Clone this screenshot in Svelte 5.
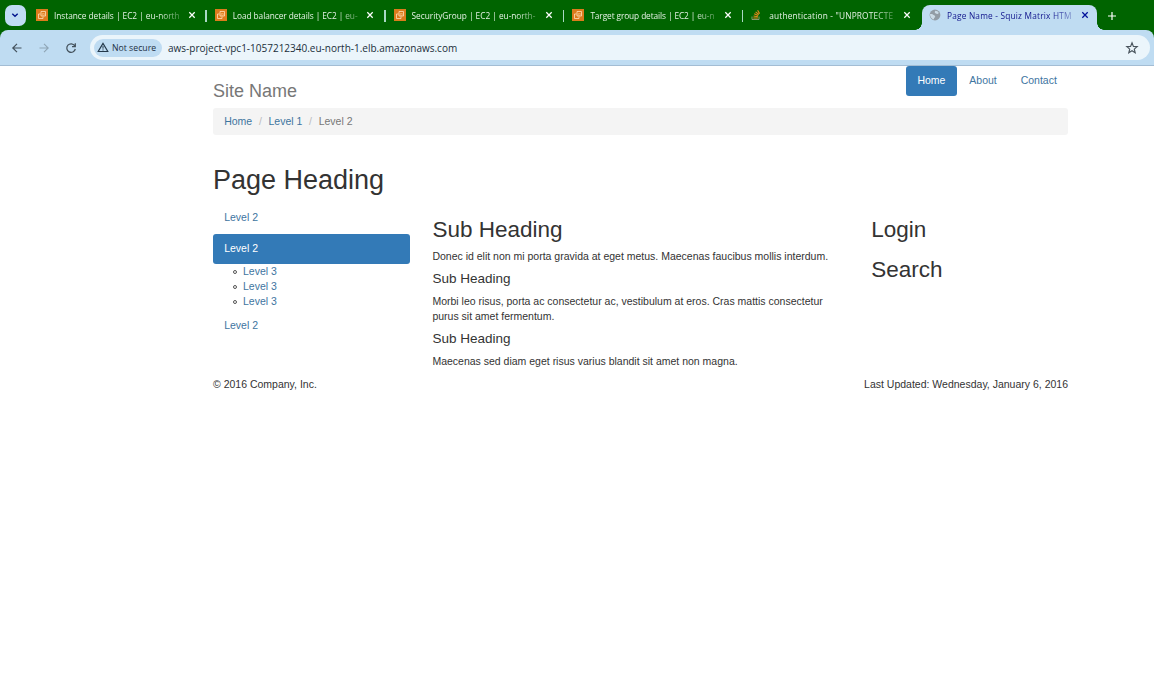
<script>
  const tabs = [
    { title: 'Instance details | EC2 | eu-north', icon: 'ec2', spacing: -0.03 },
    { title: 'Load balancer details | EC2 | eu-', icon: 'ec2', spacing: -0.07 },
    { title: 'SecurityGroup | EC2 | eu-north-', icon: 'ec2', spacing: -0.02 },
    { title: 'Target group details | EC2 | eu-n', icon: 'ec2', spacing: -0.1 },
    { title: 'authentication - "UNPROTECTE', icon: 'stack', spacing: 0.18 },
    { title: 'Page Name - Squiz Matrix HTM', icon: 'globe', active: true, spacing: 0.2 }
  ];
</script>

<div class="browser">
  <div class="tabstrip">
    <button class="tabsearch" aria-label="Search tabs">
      <svg width="8" height="8" viewBox="0 0 8 8"><path d="M1.3 2.7 4 5.3l2.7-2.6" fill="none" stroke="#00148c" stroke-width="1.4" /></svg>
    </button>
    <div class="tabs">
      {#each tabs as tab}
        <div class="tab" class:active={tab.active}>
          <span class="favicon">
            {#if tab.icon === 'ec2'}
              <svg width="12" height="12" viewBox="0 0 12 12"><path fill="#dc7b1c" d="M0 0h12v12H0z" /><path d="M5 2.5h4.5V7H5zM4.5 5h-2v4.5H7v-2" fill="none" stroke="#ffe0b8" stroke-width=".8" /><path d="M6.3 4.5h2v1.7h-2z" fill="none" stroke="#ffd09a" stroke-width=".5" /></svg>
            {:else if tab.icon === 'stack'}
              <svg width="12" height="12" viewBox="0 0 12 12"><path d="M1 7.5v3h7v-3" fill="none" stroke="#a6a68c" stroke-width=".8" /><path d="M2.3 9h4.5M2.5 7l4.4.8M3.2 4.8l4 1.8M4.6 2.8l3.2 2.7M6.6 1.2l2 3.4" stroke="#e9881c" stroke-width="1.1" /></svg>
            {:else}
              <svg width="12" height="12" viewBox="0 0 12 12"><circle cx="6" cy="6" r="5.4" fill="#929ca5" /><path d="M1 5c1.8-.3 3 .2 3.6 1.1.5.6 1.6.5 1.6 1.6-.1.9-1 .8-1.2 1.7l-.1 1.1C2.3 9.8.9 7.6 1 5zM6.2 1.8c1.8 0 2.9.8 3.6 2.1-.7.9-1.5 1.3-2.2.8-.8-.5-1.6-.3-1.8-1.2-.1-.7.3-1 .4-1.7z" fill="#cbdbe6" /></svg>
            {/if}
          </span>
          <span class="title" style:letter-spacing="{tab.spacing}px">{tab.title}</span>
          <svg class="close" width="8" height="8" viewBox="0 0 8 8"><path d="m1.3 1.3 5.4 5.4M6.7 1.3 1.3 6.7" stroke="currentColor" stroke-width="1.25" /></svg>
        </div>
      {/each}
    </div>
    <svg class="plus" width="10" height="10" viewBox="0 0 10 10"><path d="M5 1v8M1 5h8" stroke="#fff" stroke-width="1.2" /></svg>
  </div>

  <div class="toolbar">
    <svg class="nav" width="12" height="12" viewBox="0 0 12 12"><path d="M10.5 6H2M6 1.8 1.8 6 6 10.2" fill="none" stroke="#43515c" stroke-width="1.2" /></svg>
    <svg class="nav" width="12" height="12" viewBox="0 0 12 12"><path d="M1.5 6H10M6 1.8 10.2 6 6 10.2" fill="none" stroke="#8fa5b5" stroke-width="1.1" /></svg>
    <svg class="nav" width="12" height="12" viewBox="0 0 12 12"><path d="M9.7 3.7A4.3 4.3 0 1 0 10.3 7M10.3 1.2v3.3H7" fill="none" stroke="#43515c" stroke-width="1.25" /></svg>
    <div class="omnibox">
      <div class="chip">
        <svg width="12" height="11" viewBox="0 0 12 11"><path d="M6 1.4 1.2 9.5h9.6z" fill="none" stroke="#24384a" stroke-width="1.15" /><path d="M6 4v2.7M6 7.4v1.1" stroke="#24384a" stroke-width="1" /></svg>
        <span>Not secure</span>
      </div>
      <span class="url">aws-project-vpc1-1057212340.eu-north-1.elb.amazonaws.com</span>
      <svg class="star" width="14" height="14" viewBox="0 0 14 14"><path d="m7 1.8 1.4 3.6 3.8.2-2.9 2.5.9 3.7L7 9.8l-3.2 2 .9-3.7-2.9-2.5 3.8-.2z" fill="none" stroke="#49545d" stroke-width="1.15" /></svg>
    </div>
  </div>
</div>

<div class="container">
  <header>
    <h3>Site Name</h3>
    <nav>
      <a class="current" href="#home">Home</a>
      <a href="#about">About</a>
      <a href="#contact">Contact</a>
    </nav>
  </header>
  <ol class="breadcrumb">
    <li><a href="#home">Home</a></li>
    <li><a href="#one">Level 1</a></li>
    <li>Level 2</li>
  </ol>
  <h1>Page Heading</h1>
  <div class="row">
    <aside class="side">
      <a class="pill" href="#a">Level 2</a>
      <a class="pill on" href="#b">Level 2</a>
      <ul>
        <li><a href="#c">Level 3</a></li>
        <li><a href="#d">Level 3</a></li>
        <li><a href="#e">Level 3</a></li>
      </ul>
      <a class="pill" href="#f">Level 2</a>
    </aside>
    <main>
      <h2>Sub Heading</h2>
      <p class="first">Donec id elit non mi porta gravida at eget metus. Maecenas faucibus mollis interdum.</p>
      <h4>Sub Heading</h4>
      <p>Morbi leo risus, porta ac consectetur ac, vestibulum at eros. Cras mattis consectetur<br />purus sit amet fermentum.</p>
      <h4>Sub Heading</h4>
      <p>Maecenas sed diam eget risus varius blandit sit amet non magna.</p>
    </main>
    <section>
      <h2>Login</h2>
      <h2>Search</h2>
    </section>
  </div>
  <footer>
    <span>© 2016 Company, Inc.</span>
    <span>Last Updated: Wednesday, January 6, 2016</span>
  </footer>
</div>

<style>
  :global(body) { margin: 0; background: #fff; }
  :global(*), :global(*::before), :global(*::after) { box-sizing: border-box; }
  svg { display: block; flex: none; }
  .browser { font-family: "Open Sans", "Noto Sans", sans-serif; height: 66px; background: #006400; }
  .tabstrip { display: flex; height: 30px; }
  .tabsearch { width: 21px; height: 21px; margin: 5px 0 0 5px; padding: 0 1px 1px 0; border: 0; border-radius: 7px; background: #bfdcf3; display: grid; place-items: center; }
  .tabs { display: flex; padding-left: 1.5px; }
  .tab { position: relative; width: 178.8px; padding: 4px 12px 5px 8.5px; display: flex; align-items: center; color: #e5f2e5; }
  .tab:not(.active)::after { content: ""; position: absolute; right: -.5px; top: 10px; width: 1.5px; height: 12px; background: #a9d8c5; }
  .tab:nth-child(5)::after { display: none; }
  .favicon { width: 18px; flex: none; }
  .title { width: 130px; flex: none; white-space: nowrap; font-size: 8.3px; line-height: 16px; padding-top: 2px; -webkit-mask-image: linear-gradient(90deg, #000 80%, rgba(0, 0, 0, .3) 97%); mask-image: linear-gradient(90deg, #000 80%, rgba(0, 0, 0, .3) 97%); }
  .close { margin-left: 3.5px; color: #fff; }
  .active { width: 175px; margin: 5px 0 0 1px; padding: 0 0 5px 6.5px; border-radius: 8px 8px 0 0; background: #bfdcf2; color: #10148c; }
  .active .title { padding-top: 1px; }
  .active .close { color: #00109a; margin-left: 4.5px; }
  .active::before, .active::after { content: ""; position: absolute; bottom: 0; width: 7px; height: 7px; }
  .active::before { left: -7px; background: radial-gradient(circle at 0 0, transparent 6.5px, #bfdcf2 7px); }
  .active::after { right: -7px; background: radial-gradient(circle at 100% 0, transparent 6.5px, #bfdcf2 7px); }
  .plus { margin: 10.5px 0 0 9.5px; }
  .toolbar { height: 36px; padding: 0 4px 0 11px; display: flex; align-items: center; background: #bfdcf2; border-bottom: 1px solid #a3bdd4; border-radius: 8px 8px 0 0; }
  .nav { margin-right: 15px; }
  .omnibox { flex: 1; height: 25px; padding: 0 11px 0 4px; border-radius: 13px; background: #ebf5fb; display: flex; align-items: center; }
  .nav + .omnibox { margin-left: -2px; }
  .chip { width: 68px; height: 18px; padding-left: 3px; border-radius: 9px; background: #bfdcf2; color: #1c2f42; display: flex; align-items: center; gap: 3px; font-size: 8.7px; white-space: nowrap; }
  .url { flex: 1; margin-left: 6px; font-size: 10px; color: #202e3a; white-space: nowrap; }

  .container { width: 855px; margin-left: 213px; font: 10.5px/15px "Liberation Sans", Arial, sans-serif; color: #333; }
  a { color: #3e759f; text-decoration: none; }
  h1, h2, h3, h4, p, ul, ol { margin: 0; font-weight: 400; }
  header { height: 42px; display: flex; justify-content: space-between; }
  h3 { padding-top: 15px; font-size: 18px; line-height: 20px; color: #777; }
  nav { display: flex; gap: 1.5px; }
  nav a { height: 30px; padding: 7px 11.2px; border-radius: 3px; }
  nav .current { background: #337ab7; color: #fff; }
  .breadcrumb { height: 27px; padding: 6px 11.2px; border-radius: 3px; background: #f4f4f4; display: flex; list-style: none; color: #777; }
  .breadcrumb li + li::before { content: "/"; padding: 0 6.7px; color: #bbb; }
  h1 { margin-top: 30px; font-size: 27px; line-height: 30px; }
  .row { display: grid; grid-template-columns: 219.4px 438.8px 1fr; height: 175px; margin-top: 7px; }
  .side { padding-right: 22.4px; }
  .pill { display: block; height: 30px; padding: 7.5px 11.2px; border-radius: 3px; }
  .pill.on { background: #337ab7; color: #fff; margin-top: 2px; padding-top: 7px; }
  ul { padding-left: 30px; margin-bottom: 1.5px; list-style: none; }
  ul li { display: flex; align-items: center; }
  ul li::before { content: ""; width: 4px; height: 4px; margin: 1px 6px 0 -10px; border: 1px solid #555; border-radius: 50%; }
  h2 { font-size: 22.5px; line-height: 25px; padding-top: 15px; }
  p { line-height: 15px; white-space: nowrap; }
  main .first { margin-top: 7px; }
  h4 { margin: 7px 0 8px; font-size: 13.5px; line-height: 15px; }
  footer { display: flex; justify-content: space-between; }
</style>
